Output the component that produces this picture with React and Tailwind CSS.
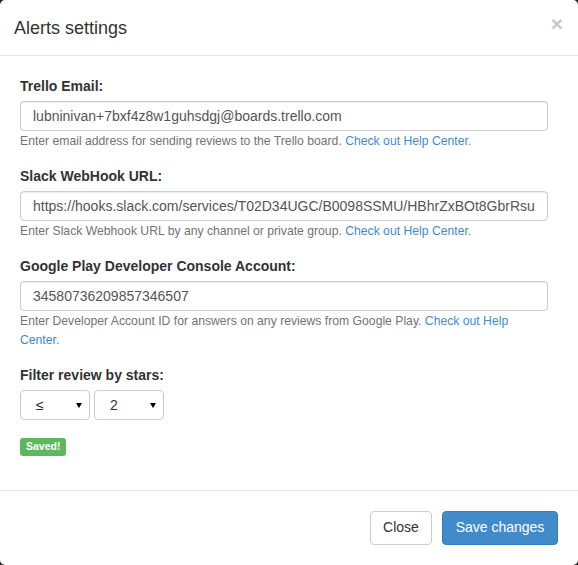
import React from "react";

const font = { fontFamily: '"Liberation Sans", Arial, Helvetica, sans-serif' };

function Field({ label, value, children }) {
  return (
    <div className="mb-[15px]">
      <div className="text-[14px] leading-[20px] font-bold text-[#333] mb-[5px]">{label}</div>
      <input
        readOnly
        defaultValue={value}
        className="block w-full h-[30px] px-[12px] text-[14px] text-[#555] bg-white border border-[#ccc] rounded-[4px] shadow-[inset_0_1px_1px_rgba(0,0,0,0.075)] outline-none"
        style={font}
      />
      <p className="mt-[1px] text-[12.2px] leading-[19px] text-[#737373]">{children}</p>
    </div>
  );
}

function Help() {
  return <a className="text-[#428bca]">Check out Help Center.</a>;
}

function Select({ value }) {
  return (
    <div className="relative w-[70px] h-[30px] border border-[#ccc] rounded-[4px] bg-white flex items-center pl-[15px] text-[14px] text-[#333]">
      <span>{value}</span>
      <svg className="absolute right-[7px] top-[12px]" width="6" height="5" viewBox="0 0 6 5">
        <path d="M0 0 L6 0 L3 5 Z" fill="#000" />
      </svg>
    </div>
  );
}

export default function App() {
  return (
    <div className="w-[578px] h-[565px] bg-[#1c1c1c]" style={font}>
      <div className="w-full h-full bg-white rounded-[5px] flex flex-col">
        <div className="h-[56px] shrink-0 border-b border-[#e5e5e5] flex items-center justify-between pl-[14px] pr-[15px]">
          <h4 className="text-[18px] leading-[26px] text-[#333]">Alerts settings</h4>
          <span className="text-[21px] font-bold leading-none text-[#c8c8c8] -mt-[8px]">×</span>
        </div>

        <div className="pt-[20px] pl-[20px] pr-[30px] pb-[34px]">
          <Field label="Trello Email:" value="lubninivan+7bxf4z8w1guhsdgj@boards.trello.com">
            Enter email address for sending reviews to the Trello board. <Help />
          </Field>
          <Field label="Slack WebHook URL:" value="https://hooks.slack.com/services/T02D34UGC/B0098SSMU/HBhrZxBOt8GbrRsuXk2">
            Enter Slack Webhook URL by any channel or private group. <Help />
          </Field>
          <Field label="Google Play Developer Console Account:" value="34580736209857346507">
            Enter Developer Account ID for answers on any reviews from Google Play. <Help />
          </Field>

          <div className="mt-[1px]">
            <div className="text-[14px] leading-[20px] font-bold text-[#333] mb-[5px]">Filter review by stars:</div>
            <div className="flex gap-[4px]">
              <Select value="≤" />
              <Select value="2" />
            </div>
          </div>

          <div className="mt-[18px] flex">
            <span className="bg-[#5cb85c] text-white font-bold text-[10.5px] leading-none px-[6px] pt-[3px] pb-[4px] rounded-[3px]">
              Saved!
            </span>
          </div>
        </div>

        <div className="border-t border-[#e5e5e5] flex justify-end gap-[10px] pt-[20px] px-[20px]">
          <button className="w-[62px] h-[34px] border border-[#ccc] rounded-[4px] bg-white text-[14px] text-[#333]">
            Close
          </button>
          <button className="w-[116px] h-[34px] border border-[#357ebd] rounded-[4px] bg-[#428bca] text-[14px] text-white">
            Save changes
          </button>
        </div>
      </div>
    </div>
  );
}
